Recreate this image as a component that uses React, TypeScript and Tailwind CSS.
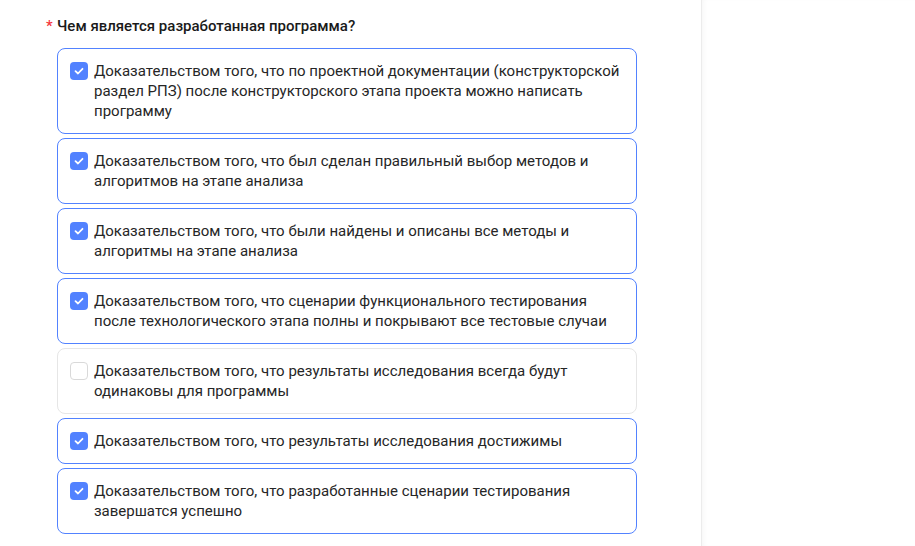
const OPTIONS: Array<{ text: string; checked: boolean }> = [
  {
    text: "Доказательством того, что по проектной документации (конструкторской раздел РПЗ) после конструкторского этапа проекта можно написать программу",
    checked: true,
  },
  {
    text: "Доказательством того, что был сделан правильный выбор методов и алгоритмов на этапе анализа",
    checked: true,
  },
  {
    text: "Доказательством того, что были найдены и описаны все методы и алгоритмы на этапе анализа",
    checked: true,
  },
  {
    text: "Доказательством того, что сценарии функционального тестирования после технологического этапа полны и покрывают все тестовые случаи",
    checked: true,
  },
  {
    text: "Доказательством того, что результаты исследования всегда будут одинаковы для программы",
    checked: false,
  },
  {
    text: "Доказательством того, что результаты исследования достижимы",
    checked: true,
  },
  {
    text: "Доказательством того, что разработанные сценарии тестирования завершатся успешно",
    checked: true,
  },
];

function CheckBox({ checked }: { checked: boolean }) {
  if (!checked) {
    return <span className="mt-[1px] h-[18px] w-[18px] shrink-0 rounded-[4px] border border-[#d9d9d9] bg-white" />;
  }
  return (
    <span className="mt-[1px] flex h-[18px] w-[18px] shrink-0 items-center justify-center rounded-[4px] bg-[#5282ff]">
      <svg width="12" height="12" viewBox="0 0 12 12" fill="none">
        <path d="M2.5 6.2 5 8.5 9.5 3.8" stroke="white" strokeWidth="1.8" strokeLinecap="round" strokeLinejoin="round" />
      </svg>
    </span>
  );
}

export default function App() {
  return (
    <div className="flex h-[546px] w-[915px] overflow-hidden bg-white font-['Roboto',sans-serif] text-[#1f1f1f]">
      <main className="w-[701px] shrink-0 pl-[46px] pt-[16px]">
        <h2 className="flex h-[20px] items-center text-[15px] font-medium leading-5 text-[#1a1a1a]">
          <span className="w-[11px] text-[#f5363d]">*</span>
          Чем является разработанная программа?
        </h2>
        <div className="mt-[12px] ml-[11px] flex w-[580px] flex-col gap-[4px]">
          {OPTIONS.map((option) => (
            <label
              key={option.text}
              className={
                option.checked
                  ? "flex gap-[6px] rounded-[8px] border border-[#5282ff] py-[12px] pl-[12px] pr-[12px]"
                  : "flex gap-[6px] rounded-[8px] border border-[#e6e6e6] py-[12px] pl-[12px] pr-[12px]"
              }
            >
              <CheckBox checked={option.checked} />
              <span className="text-[15px] leading-5 text-[#262626]">{option.text}</span>
            </label>
          ))}
        </div>
      </main>
      <aside className="flex-1 border-l border-[#ececec] bg-white shadow-[inset_4px_0_6px_-4px_rgba(0,0,0,0.06)]" />
    </div>
  );
}
